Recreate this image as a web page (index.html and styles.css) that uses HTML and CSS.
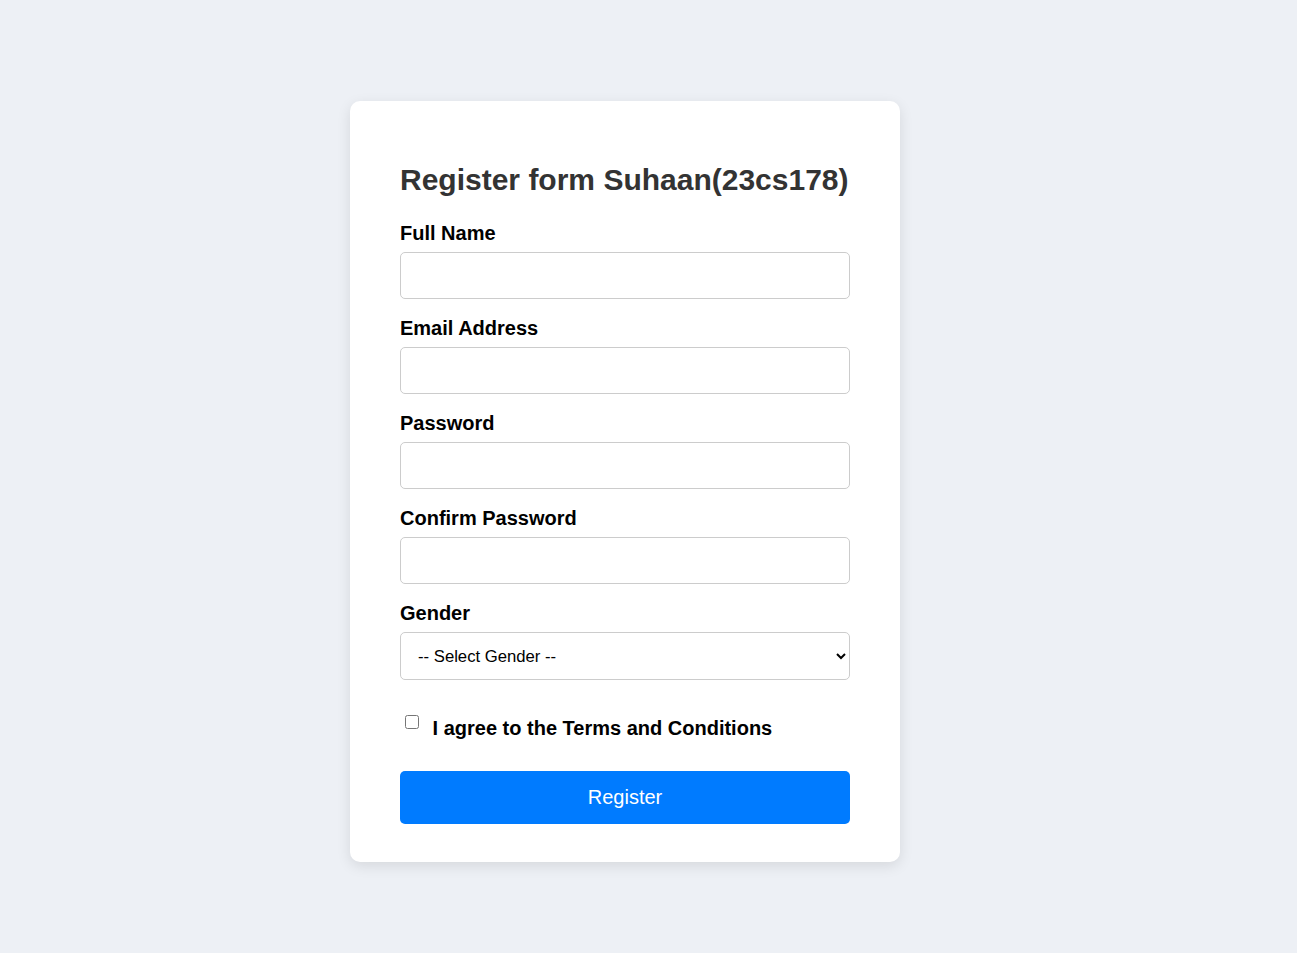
FILE: index.html
```html
<!DOCTYPE html>
<html lang="en">
<head>
<meta charset="utf-8">
<title>Register</title>
<link rel="stylesheet" href="styles.css">
</head>
<body>
<div class="page">
  <form class="card">
    <h2 class="title">Register form Suhaan(23cs178)</h2>
    <label class="field-label" for="name">Full Name</label>
    <input class="field" id="name" type="text">
    <label class="field-label" for="email">Email Address</label>
    <input class="field" id="email" type="email">
    <label class="field-label" for="pw">Password</label>
    <input class="field" id="pw" type="password">
    <label class="field-label" for="pw2">Confirm Password</label>
    <input class="field" id="pw2" type="password">
    <label class="field-label" for="gender">Gender</label>
    <select class="field select" id="gender">
      <option>-- Select Gender --</option>
      <option>Male</option>
      <option>Female</option>
      <option>Other</option>
    </select>
    <label class="terms"><input type="checkbox" class="check"> I agree to the Terms and Conditions</label>
    <button type="button" class="btn">Register</button>
  </form>
</div>
</body>
</html>
```
FILE: styles.css
```css
html, body {
  margin: 0;
  padding: 0;
}
body {
  background: #edf0f5;
  font-family: "Liberation Sans", Arial, sans-serif;
}
.page {
  display: flex;
  justify-content: center;
  width: 1250px;
  padding-top: 101px;
  min-height: 852px;
}
.card {
  width: 450px;
  background: #fff;
  border-radius: 10px;
  padding: 61px 50px 38px;
  box-shadow: 0 4px 14px rgba(0, 0, 0, 0.1);
  display: flex;
  flex-direction: column;
  align-self: flex-start;
}
.title {
  margin: 0 0 24px;
  font-size: 30px;
  line-height: 36px;
  color: #333;
  font-weight: bold;
}
.field-label {
  display: block;
  font-size: 20px;
  line-height: 22px;
  font-weight: bold;
  color: #000;
  margin-bottom: 8px;
}
.field {
  box-sizing: border-box;
  width: 100%;
  height: 47px;
  border: 1px solid #ccc;
  border-radius: 5px;
  margin: 0 0 18px;
  padding: 0 13px;
  font-family: "Liberation Sans", Arial, sans-serif;
  font-size: 16.7px;
  background: #fff;
}
.select {
  height: 48px;
  color: #000;
  margin-bottom: 35px;
}
.terms {
  display: block;
  font-size: 20px;
  line-height: 22px;
  font-weight: bold;
  color: #000;
  margin-bottom: 32px;
}
.check {
  width: 14px;
  height: 14px;
  margin: 0 8px 0 5px;
  vertical-align: 6px;
}
.btn {
  height: 53px;
  width: 100%;
  border: none;
  border-radius: 5px;
  background: #007bff;
  color: #fff;
  font-family: "Liberation Sans", Arial, sans-serif;
  font-size: 20px;
}
```
